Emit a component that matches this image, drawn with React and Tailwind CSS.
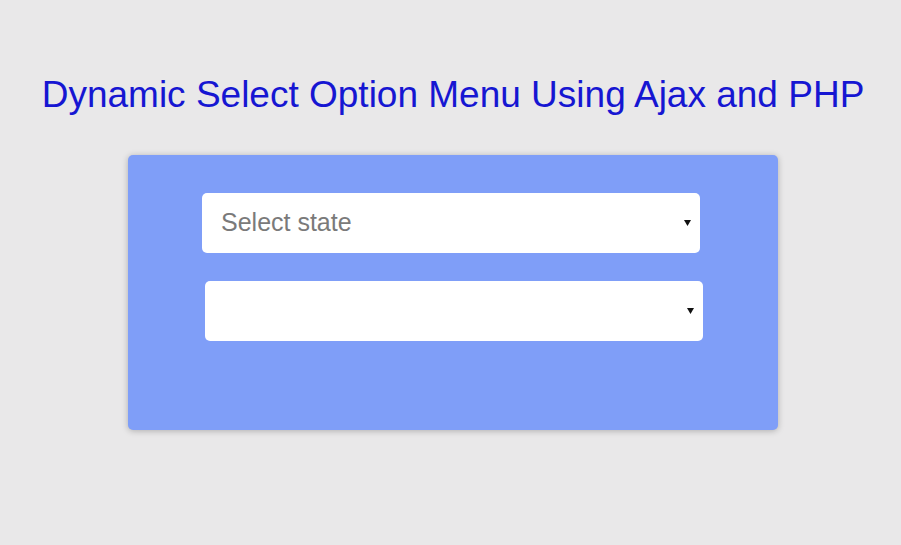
import React from "react";

function Caret() {
  return (
    <svg width="7" height="6" viewBox="0 0 7 6" className="shrink-0">
      <path d="M0 0 H7 L3.5 6 Z" fill="#111" />
    </svg>
  );
}

function FakeSelect({ label, className }) {
  return (
    <div
      className={`flex h-[60px] w-[498px] items-center justify-between rounded-[5px] bg-white pl-[19px] pr-[9px] ${className}`}
    >
      <span className="text-[25px] text-[#7a7a7a]">{label}</span>
      <Caret />
    </div>
  );
}

export default function App() {
  return (
    <div
      className="flex h-[545px] w-[901px] flex-col items-center bg-[#e9e8e9]"
      style={{ fontFamily: '"Liberation Sans", Arial, sans-serif' }}
    >
      <h1 className="mt-[73px] ml-[5px] text-[37px] leading-[44px] text-[#1616d2]">
        Dynamic Select Option Menu Using Ajax and PHP
      </h1>
      <div className="mt-[38px] ml-[5px] flex h-[275px] w-[650px] flex-col pl-[74px] pt-[38px] rounded-[5px] bg-[#7f9ef8] shadow-[0_1px_6px_rgba(0,0,0,0.25)]">
        <FakeSelect label="Select state" />
        <FakeSelect label="" className="ml-[3px] mt-[28px]" />
      </div>
    </div>
  );
}
